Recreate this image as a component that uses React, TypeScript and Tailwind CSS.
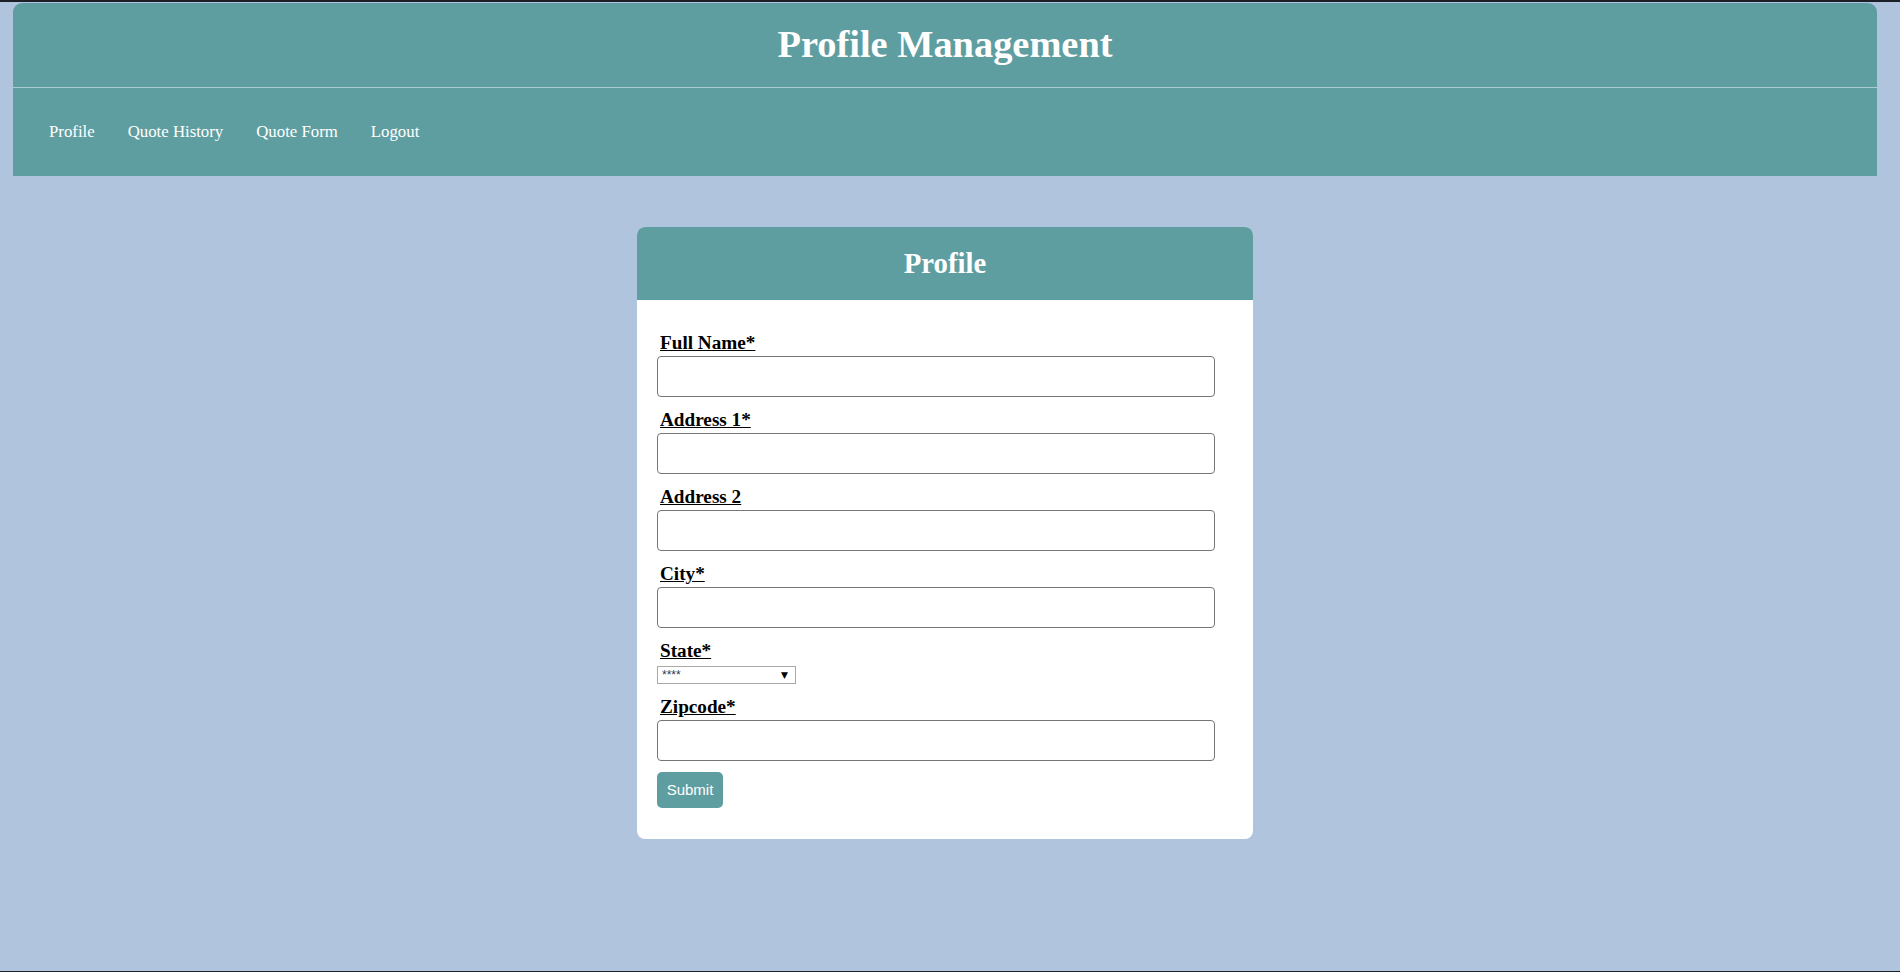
import React from "react";

const serif = { fontFamily: '"Liberation Serif", "Times New Roman", serif' };

function Label({ children }: { children: React.ReactNode }) {
  return (
    <label className="block h-[22px] leading-[19px] pl-[3px] text-[19.2px] font-bold underline text-black">
      {children}
    </label>
  );
}

function Field({ label }: { label: string }) {
  return (
    <div className="flex flex-col mb-[13px]">
      <Label>{label}</Label>
      <input
        type="text"
        className="block mt-[1px] h-[41px] w-[558px] rounded-[4px] border border-[#767676] bg-white outline-none"
      />
    </div>
  );
}

export default function App() {
  return (
    <div className="h-[972px] w-full bg-[#B0C4DE] flex flex-col overflow-hidden" style={serif}>
      <div className="h-[2px] bg-[#1c1f26] shrink-0" />
      <div className="ml-[13px] w-[1864px] flex flex-col flex-1">
        <header className="mt-[1px] bg-[#5F9EA0] rounded-t-[9px] text-white">
          <div className="h-[84px] flex items-center justify-center">
            <h1 className="text-[38.4px] font-bold leading-normal">Profile Management</h1>
          </div>
          <div className="h-[1px] bg-[#a9cdd1]" />
          <nav className="h-[88px] flex items-center pl-[36px] gap-[33px] text-[16.8px]">
            <a>Profile</a>
            <a>Quote History</a>
            <a>Quote Form</a>
            <a>Logout</a>
          </nav>
        </header>

        <div className="mt-[51px] mx-auto w-[616px] rounded-[8px] bg-white overflow-hidden">
          <div className="h-[73px] bg-[#5F9EA0] flex items-center justify-center">
            <h2 className="text-[28.8px] font-bold text-white leading-normal">Profile</h2>
          </div>
          <form className="pt-[33px] px-[20px] pb-[31px] flex flex-col">
            <Field label="Full Name*" />
            <Field label="Address 1*" />
            <Field label="Address 2" />
            <Field label="City*" />
            <div className="flex flex-col mb-[13px]">
              <Label>State*</Label>
              <div className="relative mt-[3px] h-[18px] w-[139px]">
                <select
                  className="block appearance-none h-[18px] w-[139px] border border-[#a9a9a9] bg-white pl-[4px] text-[12px] leading-[14px] text-[#2b3a55]"
                  style={{ fontFamily: '"Liberation Sans", Arial, sans-serif' }}
                  defaultValue="****"
                >
                  <option>****</option>
                </select>
                <span
                  className="pointer-events-none absolute right-[8px] top-[3px] text-[9px] leading-[12px] text-black"
                  style={{ fontFamily: '"DejaVu Sans", sans-serif' }}
                >
                  ▼
                </span>
              </div>
            </div>
            <Field label="Zipcode*" />
            <button
              type="button"
              className="-mt-[2px] h-[36px] w-[66px] rounded-[5px] bg-[#5F9EA0] text-white text-[15px]"
              style={{ fontFamily: '"Liberation Sans", Arial, sans-serif' }}
            >
              Submit
            </button>
          </form>
        </div>
        <div className="flex-1" />
      </div>
      <div className="h-[1px] bg-[#1c1f26] shrink-0" />
    </div>
  );
}
